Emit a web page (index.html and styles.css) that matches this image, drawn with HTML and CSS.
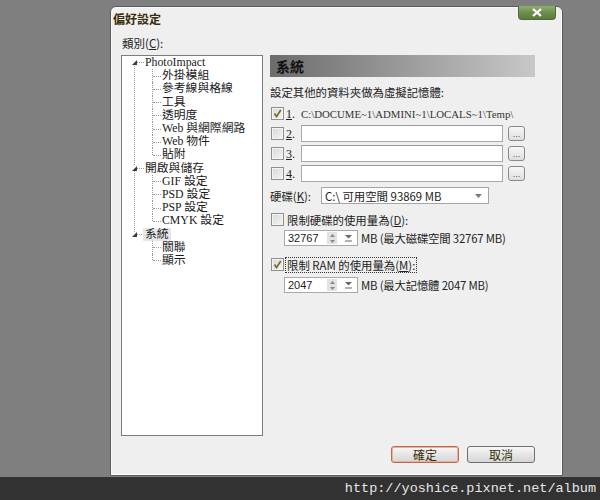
FILE: index.html
```html
<!DOCTYPE html>
<html lang="zh-Hant">
<head>
<meta charset="utf-8">
<title>偏好設定</title>
<link rel="stylesheet" href="styles.css">
</head>
<body>
<div class="screen">
  <div class="stage">
    <div class="dialog">
      <div class="titlebar"><span class="title">偏好設定</span></div>
      <div class="close"><svg width="12" height="9" viewBox="0 0 12 9"><path d="M2 1 L10 8 M10 1 L2 8" stroke="#fff" stroke-width="2.2" fill="none"/></svg></div>
      <div class="body">
        <div class="left">
          <div class="cat-label">類別(<u>C</u>):</div>
          <ul class="tree">
            <li class="root">
              <div class="row"><svg class="exp" width="5" height="5" viewBox="0 0 5 5"><polygon points="5,0 5,5 0,5" fill="#3a3a3a"/></svg><span class="conn"></span><span class="txt">PhotoImpact</span></div>
              <ul class="kids">
                <li><span class="txt">外掛模組</span></li>
                <li><span class="txt">參考線與格線</span></li>
                <li><span class="txt">工具</span></li>
                <li><span class="txt">透明度</span></li>
                <li><span class="txt">Web 與網際網路</span></li>
                <li><span class="txt">Web 物件</span></li>
                <li><span class="txt">貼附</span></li>
              </ul>
            </li>
            <li class="root">
              <div class="row"><svg class="exp" width="5" height="5" viewBox="0 0 5 5"><polygon points="5,0 5,5 0,5" fill="#3a3a3a"/></svg><span class="conn"></span><span class="txt">開啟與儲存</span></div>
              <ul class="kids">
                <li><span class="txt">GIF 設定</span></li>
                <li><span class="txt">PSD 設定</span></li>
                <li><span class="txt">PSP 設定</span></li>
                <li><span class="txt">CMYK 設定</span></li>
              </ul>
            </li>
            <li class="root">
              <div class="row"><svg class="exp" width="5" height="5" viewBox="0 0 5 5"><polygon points="5,0 5,5 0,5" fill="#3a3a3a"/></svg><span class="conn"></span><span class="txt selected">系統</span></div>
              <ul class="kids">
                <li><span class="txt">關聯</span></li>
                <li><span class="txt">顯示</span></li>
              </ul>
            </li>
          </ul>
        </div>
        <div class="right">
          <div class="section-head">系統</div>
          <div class="desc">設定其他的資料夾做為虛擬記憶體:</div>
          <div class="path-row first">
            <span class="check checked"><svg width="11" height="11" viewBox="0 0 11 11"><path d="M2.5 5.5 L4.5 8.5 L8.8 2" stroke="#7a6628" stroke-width="1.6" fill="none"/></svg></span>
            <span class="num"><u>1</u>.</span>
            <span class="path-text">C:\DOCUME~1\ADMINI~1\LOCALS~1\Temp\</span>
          </div>
          <div class="path-row">
            <span class="check"></span>
            <span class="num"><u>2</u>.</span>
            <span class="field"></span>
            <span class="browse">...</span>
          </div>
          <div class="path-row">
            <span class="check"></span>
            <span class="num"><u>3</u>.</span>
            <span class="field"></span>
            <span class="browse">...</span>
          </div>
          <div class="path-row">
            <span class="check"></span>
            <span class="num"><u>4</u>.</span>
            <span class="field"></span>
            <span class="browse">...</span>
          </div>
          <div class="disk-row">
            <span class="disk-label">硬碟(<u>K</u>):</span>
            <span class="combo"><span class="combo-text">C:\ 可用空間 93869 MB</span><svg class="combo-arrow" width="7" height="4" viewBox="0 0 7 4"><polygon points="0,0 7,0 3.5,4" fill="#7a7a7a"/></svg></span>
          </div>
          <div class="opt-row disk-opt">
            <span class="check"></span>
            <span class="opt-label">限制硬碟的使用量為(<u>D</u>):</span>
          </div>
          <div class="spin-row spin-disk">
            <span class="spin"><span class="spin-value">32767</span><span class="spin-ud"><svg width="5" height="9" viewBox="0 0 5 9"><polygon points="2.5,0 5,3 0,3" fill="#888"/><polygon points="0,6 5,6 2.5,9" fill="#888"/></svg></span><span class="spin-dd"><svg width="7" height="7" viewBox="0 0 7 7"><polygon points="0,0 7,0 3.5,3.5" fill="#666"/><rect x="0" y="5.5" width="7" height="1" fill="#666"/></svg></span></span>
            <span class="spin-note">MB (最大磁碟空間 32767 MB)</span>
          </div>
          <div class="opt-row ram-opt">
            <span class="check checked"><svg width="11" height="11" viewBox="0 0 11 11"><path d="M2.5 5.5 L4.5 8.5 L8.8 2" stroke="#7a6628" stroke-width="1.6" fill="none"/></svg></span>
            <span class="opt-label focus">限制 RAM 的使用量為(<u>M</u>):</span>
          </div>
          <div class="spin-row spin-ram">
            <span class="spin"><span class="spin-value">2047</span><span class="spin-ud"><svg width="5" height="9" viewBox="0 0 5 9"><polygon points="2.5,0 5,3 0,3" fill="#888"/><polygon points="0,6 5,6 2.5,9" fill="#888"/></svg></span><span class="spin-dd"><svg width="7" height="7" viewBox="0 0 7 7"><polygon points="0,0 7,0 3.5,3.5" fill="#666"/><rect x="0" y="5.5" width="7" height="1" fill="#666"/></svg></span></span>
            <span class="spin-note">MB (最大記憶體 2047 MB)</span>
          </div>
        </div>
      </div>
      <div class="footer">
        <span class="btn default">確定</span>
        <span class="btn">取消</span>
      </div>
    </div>
  </div>
  <div class="urlbar">http://yoshice.pixnet.net/album</div>
</div>
</body>
</html>
```
FILE: styles.css
```css
html, body {
  margin: 0;
  padding: 0;
}
body {
  font-family: "Liberation Serif", "Noto Sans CJK TC", serif;
  font-size: 12px;
  color: #1a1a1a;
}
.screen {
  width: 600px;
  height: 500px;
  display: flex;
  flex-direction: column;
  background: #7f7f7f;
  overflow: hidden;
}
.stage {
  height: 477px;
  padding: 6px 0 0 110px;
  box-sizing: border-box;
}
.dialog {
  position: relative;
  width: 453px;
  height: 470px;
  box-sizing: border-box;
  background: #efefef;
  border: 1px solid #5c5c5c;
  border-radius: 6px 6px 0 0;
  box-shadow: inset -1px -1px 0 #fcfcfc, inset 1px 1px 0 #f7f7f7;
  display: flex;
  flex-direction: column;
}
.titlebar {
  height: 24px;
  padding: 5px 0 0 2px;
  box-sizing: border-box;
}
.title {
  font-family: "Noto Sans CJK TC", sans-serif;
  font-weight: bold;
  font-size: 12px;
  line-height: 14px;
  color: #3a2e08;
  display: block;
}
.close {
  position: absolute;
  top: -1px;
  right: 6px;
  width: 38px;
  height: 14px;
  box-sizing: border-box;
  border: 1px solid #4f6b35;
  border-top: none;
  border-radius: 0 0 4px 4px;
  background: linear-gradient(#8fae6f, #6c8c4c 55%, #5b7b3d);
  display: flex;
  align-items: center;
  justify-content: center;
}
.close svg { display: block; }
.body {
  flex: 1;
  display: flex;
  padding-left: 10px;
}
.left {
  width: 142px;
  display: flex;
  flex-direction: column;
}
.cat-label {
  font-family: "Noto Sans CJK TC", sans-serif;
  font-size: 11.5px;
  line-height: 14px;
  margin: 5px 0 5px 1px;
  color: #222;
}
.tree {
  list-style: none;
  margin: 0;
  padding: 0;
  height: 381px;
  box-sizing: border-box;
  background: #fff;
  border: 1px solid #7c7c7c;
}
.tree ul {
  list-style: none;
  margin: 0;
}
.root {
  position: relative;
}
.root::before {
  content: "";
  position: absolute;
  left: 12px;
  top: 6px;
  bottom: -7px;
  border-left: 1px dotted #9a9a9a;
}
.root:last-child::before {
  display: none;
}
.row {
  height: 13.2px;
  display: flex;
  align-items: center;
  padding-left: 10px;
  position: relative;
}
.exp {
  display: block;
  position: relative;
  background: #fff;
}
.conn {
  width: 7px;
  border-top: 1px dotted #9a9a9a;
  margin-right: 1px;
}
.txt {
  line-height: 13px;
  white-space: nowrap;
  font-family: "Liberation Serif", "Noto Sans CJK TC", serif;
  font-size: 11.8px;
  color: #1a1a1a;
}
.selected {
  background: #e6e6e6;
  padding: 0 2px;
  margin-left: -2px;
}
.kids {
  padding: 0 0 0 30px;
}
.kids li {
  position: relative;
  height: 13.2px;
  display: flex;
  align-items: center;
  padding-left: 10px;
}
.kids li::before {
  content: "";
  position: absolute;
  left: 0;
  top: 0;
  height: 100%;
  border-left: 1px dotted #9a9a9a;
}
.kids li:last-child::before {
  height: 50%;
}
.kids li::after {
  content: "";
  position: absolute;
  left: 1px;
  top: 50%;
  width: 8px;
  border-top: 1px dotted #9a9a9a;
}
.right {
  margin-left: 7px;
  padding-top: 24px;
  width: 265px;
  display: flex;
  flex-direction: column;
  font-family: "Noto Sans CJK TC", sans-serif;
  font-size: 11.4px;
}
.section-head {
  height: 22px;
  line-height: 22px;
  padding-left: 6px;
  font-weight: bold;
  font-size: 14px;
  color: #111;
  background: linear-gradient(90deg, #6c6c6c, #9a9a9a 50%, #c8c8c8);
}
.desc {
  margin-top: 8px;
  line-height: 14px;
  color: #222;
}
.path-row {
  display: flex;
  align-items: center;
  height: 17px;
  margin-top: 3px;
}
.path-row.first {
  margin-top: 6px;
}
.check {
  width: 13px;
  height: 13px;
  box-sizing: border-box;
  margin-left: 1px;
  border: 1px solid #8e8f8f;
  background: linear-gradient(135deg, #d8d8d8, #f4f4f4);
  box-shadow: inset 0 0 0 1px #f4f4f4;
  display: flex;
  align-items: center;
  justify-content: center;
  flex: none;
}
.check svg { display: block; }
.num {
  width: 13px;
  margin-left: 2px;
  font-family: "Liberation Serif", serif;
  font-size: 12px;
  line-height: 14px;
  color: #222;
}
.path-text {
  margin-left: 2px;
  font-family: "Liberation Serif", serif;
  font-size: 10.8px;
  color: #333;
  white-space: nowrap;
  line-height: 14px;
}
.field {
  margin-left: 2px;
  width: 202px;
  height: 17px;
  box-sizing: border-box;
  background: #fff;
  border: 1px solid #a9a9a9;
  border-top-color: #9a9a9a;
}
.browse {
  margin-left: 5px;
  width: 17px;
  height: 15px;
  box-sizing: border-box;
  border: 1px solid #8a8a8a;
  border-radius: 3px;
  background: linear-gradient(#f7f7f7, #dedede);
  font-family: "Liberation Sans", sans-serif;
  font-size: 9px;
  line-height: 14px;
  text-align: center;
  color: #555;
}
.disk-row {
  display: flex;
  align-items: center;
  height: 17px;
  margin-top: 5px;
}
.disk-label {
  width: 51px;
  line-height: 14px;
  color: #222;
}
.combo {
  width: 168px;
  height: 17px;
  box-sizing: border-box;
  border: 1px solid #a5a5a5;
  background: #fff;
  display: flex;
  align-items: center;
  padding: 0 6px 0 3px;
}
.combo-text {
  flex: 1;
  font-size: 11.4px;
  line-height: 14px;
  color: #222;
}
.combo-arrow { display: block; }
.opt-row {
  display: flex;
  align-items: center;
  height: 17px;
}
.disk-opt { margin-top: 7px; }
.ram-opt { margin-top: 10px; }
.opt-label {
  margin-left: 1px;
  padding: 0 1px;
  line-height: 14px;
  color: #222;
  border: 1px dotted transparent;
}
.opt-label.focus {
  border-color: #333;
}
.spin-row {
  display: flex;
  align-items: center;
  height: 16px;
  margin-left: 14px;
}
.spin-disk { margin-top: 2px; }
.spin-ram { margin-top: 4px; }
.spin {
  width: 74px;
  height: 16px;
  box-sizing: border-box;
  border: 1px solid #a9a9a9;
  background: #fff;
  display: flex;
  align-items: center;
  padding-left: 3px;
}
.spin-value {
  flex: 1;
  font-family: "Liberation Sans", sans-serif;
  font-size: 11px;
  color: #222;
}
.spin-ud {
  width: 10px;
  height: 12px;
  background: #e2e2e2;
  display: flex;
  align-items: center;
  justify-content: center;
  margin-right: 6px;
}
.spin-dd {
  width: 11px;
  height: 12px;
  display: flex;
  align-items: center;
  justify-content: center;
  margin-right: 3px;
}
.spin-ud svg, .spin-dd svg { display: block; }
.spin-note {
  margin-left: 3px;
  line-height: 14px;
  color: #222;
  white-space: nowrap;
  letter-spacing: -0.2px;
}
.footer {
  display: flex;
  justify-content: flex-end;
  gap: 8px;
  padding: 0 27px 12px 0;
}
.btn {
  width: 68px;
  height: 17px;
  box-sizing: border-box;
  border: 1px solid #6f6f6f;
  border-radius: 3px;
  background: linear-gradient(#f8f8f8, #e6e6e6 50%, #d6d6d6);
  font-family: "Noto Sans CJK TC", sans-serif;
  font-size: 12px;
  line-height: 15px;
  text-align: center;
  color: #3a2e08;
}
.btn.default {
  border-color: #c06850;
  box-shadow: inset 0 0 0 1px #e8b0a0;
}
.urlbar {
  height: 23px;
  background: #323232;
  color: #e6e6e6;
  font-family: "Liberation Mono", monospace;
  font-size: 13.5px;
  line-height: 23px;
  text-align: right;
  padding-right: 4px;
}
```
